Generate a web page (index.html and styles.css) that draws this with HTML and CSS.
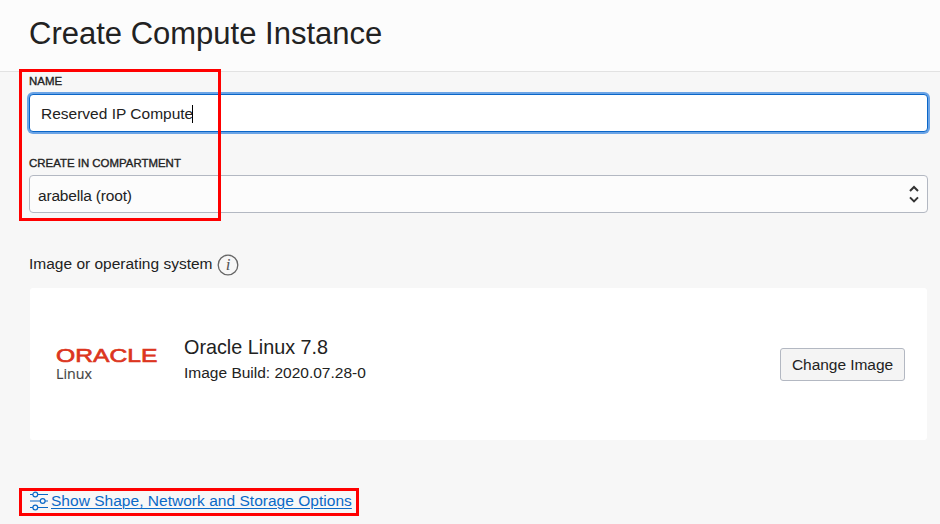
FILE: index.html
```html
<!DOCTYPE html>
<html lang="en">
<head>
<meta charset="utf-8">
<title>Create Compute Instance</title>
<link rel="stylesheet" href="styles.css">
</head>
<body>
<header class="header"><h1 class="title">Create Compute Instance</h1></header>
<main class="form">
  <div class="label">NAME</div>
  <div class="field field-focus">Reserved IP Compute<span class="caret"></span></div>
  <div class="label label-second">CREATE IN COMPARTMENT</div>
  <div class="field field-select"><span class="value">arabella (root)</span>
    <svg class="chevrons" width="12" height="20" viewBox="0 0 12 20"><path d="M2 6 6 2 10 6M2 12.4 6 16.4 10 12.4"/></svg>
  </div>
  <div class="section">Image or operating system
    <svg class="info" width="22" height="22" viewBox="0 0 22 22"><circle cx="11" cy="11" r="9.8"/><text x="11" y="16.3">i</text></svg>
  </div>
  <section class="card">
    <svg class="logo" width="104" height="36" viewBox="0 0 104 36">
      <text class="logo-oracle" transform="translate(0 16.3) scale(1.4 1)" textLength="72.5" lengthAdjust="spacingAndGlyphs">ORACLE</text>
      <text class="logo-linux" x="0" y="33" textLength="36" lengthAdjust="spacingAndGlyphs">Linux</text>
    </svg>
    <div class="details">
      <div class="image-name">Oracle Linux 7.8</div>
      <div class="image-build">Image Build: 2020.07.28-0</div>
    </div>
    <button class="button">Change Image</button>
  </section>
  <a class="options" href="#">
    <svg width="20" height="20" viewBox="0 0 20 20"><path d="M1 3.5h3M9 3.5h10M1 10h10M16 10h3M1 16.5h3M9 16.5h10"/><circle cx="6.3" cy="3.5" r="2.4"/><circle cx="13.7" cy="10" r="2.4"/><circle cx="6.3" cy="16.5" r="2.4"/></svg><span class="options-text">Show Shape, Network and Storage Options</span>
  </a>
</main>
<div class="mark mark-fields"></div>
<div class="mark mark-options"></div>
</body>
</html>
```
FILE: styles.css
```css
* { box-sizing: border-box; }
body {
  margin: 0;
  height: 524px;
  overflow: hidden;
  position: relative;
  background: #f7f7f7;
  color: #222;
  font: 15.5px/20px "Liberation Sans", Arial, sans-serif;
}
.header {
  height: 72px;
  padding: 14px 28px 0 29px;
  background: #fcfcfc;
  border-bottom: 1px solid #e2e2e2;
}
.title { margin: 0; font-size: 31px; line-height: 40px; font-weight: 400; }
.form { padding: 2px 12px 0 29px; }
.label {
  height: 20px;
  font-size: 11.45px;
  line-height: 14px;
  -webkit-text-stroke: .35px #222;
}
.label-second { margin-top: 24px; height: 19px; }
.field {
  display: flex;
  align-items: center;
  height: 38px;
  padding: 2px 8px 0;
  border: 1px solid #b3b8c2;
  border-radius: 4px;
  background: #fcfcfc;
}
.field-focus {
  padding-left: 11px;
  border-color: #0a66c8;
  background: #fff;
  box-shadow: 0 0 0 2px #6ba4e6;
}
.field-select { justify-content: space-between; padding-right: 7px; }
.value { padding-top: 2px; letter-spacing: -.18px; }
.caret { width: 1px; height: 18px; margin-left: -1px; background: #000; }
.chevrons { fill: none; stroke: #333; stroke-width: 2; }
.section { display: flex; align-items: center; gap: 4px; height: 22px; margin-top: 40px; }
.info { margin-top: 1px; flex: none; }
.info circle { fill: none; stroke: #666; stroke-width: 1.3; }
.info text { fill: #555; font: italic 17px "Liberation Serif", serif; text-anchor: middle; }
.card {
  display: flex;
  align-items: center;
  height: 152px;
  margin: 13px 1px 0;
  padding: 0 22px 0 26px;
  border-radius: 3px;
  background: #fff;
}
.logo-oracle { fill: #dc3520; stroke: #dc3520; stroke-width: .6px; font: 17.5px/1 "Liberation Sans", sans-serif; }
.logo-linux { fill: #444; stroke: #444; stroke-width: .15px; font: 14px "Open Sans", sans-serif; }
.details { flex: 1; margin-left: 24px; padding-bottom: 12px; }
.image-name { font-size: 19.8px; line-height: 28px; }
.image-build { line-height: 23px; }
.button {
  width: 125px;
  height: 33px;
  padding: 1px 0 0;
  border: 1px solid #b3b8c2;
  border-radius: 3px;
  background: #f4f4f4;
  color: #222;
  font: inherit;
  letter-spacing: -.05px;
}
.options { display: flex; align-items: center; gap: 2px; height: 22px; margin-top: 50px; color: #0a69c7; text-decoration: none; }
.options svg { fill: none; stroke: #0a69c7; stroke-width: 1.2; }
.options-text { letter-spacing: .025px; text-decoration: underline; text-decoration-thickness: 1px; text-underline-offset: 2px; }
.mark { position: absolute; border: 3px solid #f00; pointer-events: none; }
.mark-fields { left: 19px; top: 69px; width: 202px; height: 152px; }
.mark-options { left: 19px; top: 488px; width: 340px; height: 28px; }
```
